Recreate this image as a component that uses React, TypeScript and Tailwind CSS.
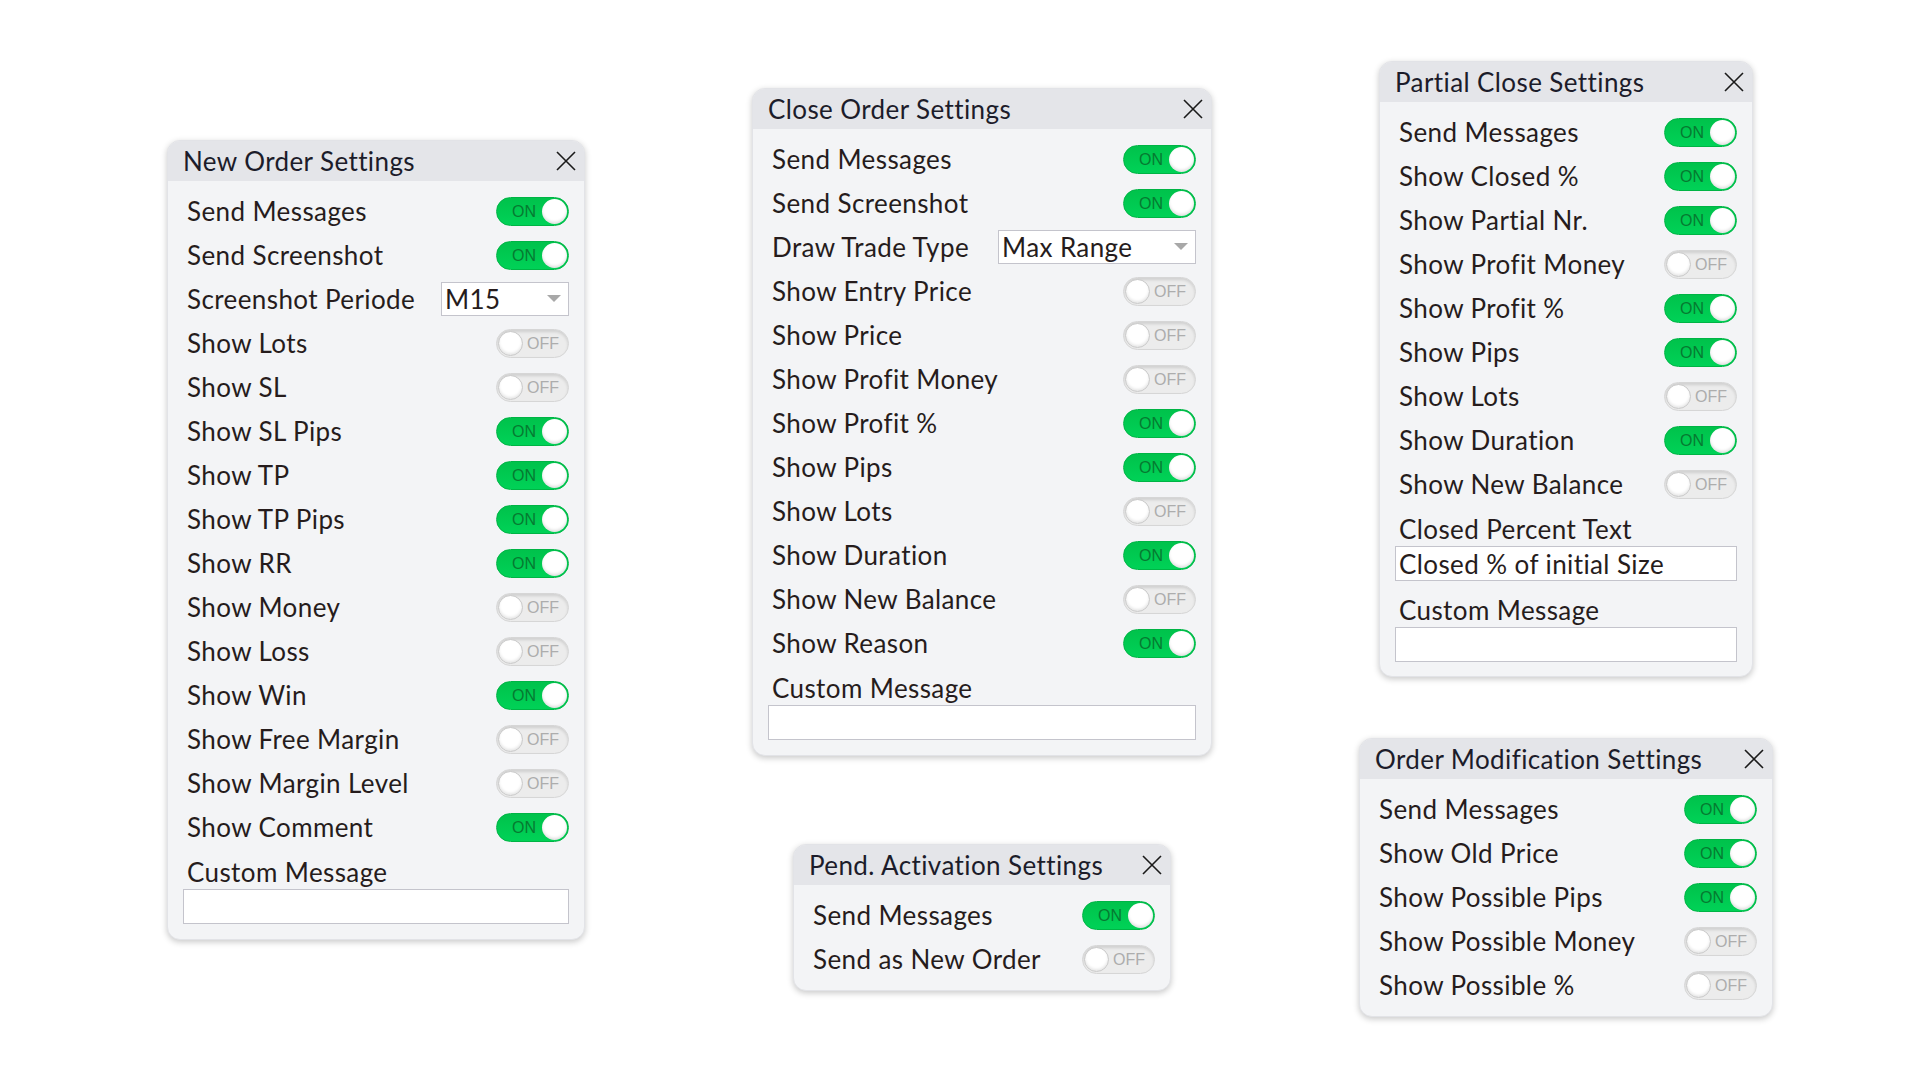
import type { ReactNode } from "react"

type Row =
  | { kind: "toggle"; label: string; on: boolean }
  | { kind: "select"; label: string; value: string; width: string }
  | { kind: "text"; label: string; value?: string; gap?: boolean }

const newOrderRows: Row[] = [
  { kind: "toggle", label: "Send Messages", on: true },
  { kind: "toggle", label: "Send Screenshot", on: true },
  { kind: "select", label: "Screenshot Periode", value: "M15", width: "w-[128px]" },
  { kind: "toggle", label: "Show Lots", on: false },
  { kind: "toggle", label: "Show SL", on: false },
  { kind: "toggle", label: "Show SL Pips", on: true },
  { kind: "toggle", label: "Show TP", on: true },
  { kind: "toggle", label: "Show TP Pips", on: true },
  { kind: "toggle", label: "Show RR", on: true },
  { kind: "toggle", label: "Show Money", on: false },
  { kind: "toggle", label: "Show Loss", on: false },
  { kind: "toggle", label: "Show Win", on: true },
  { kind: "toggle", label: "Show Free Margin", on: false },
  { kind: "toggle", label: "Show Margin Level", on: false },
  { kind: "toggle", label: "Show Comment", on: true },
  { kind: "text", label: "Custom Message" },
]

const closeOrderRows: Row[] = [
  { kind: "toggle", label: "Send Messages", on: true },
  { kind: "toggle", label: "Send Screenshot", on: true },
  { kind: "select", label: "Draw Trade Type", value: "Max Range", width: "w-[198px]" },
  { kind: "toggle", label: "Show Entry Price", on: false },
  { kind: "toggle", label: "Show Price", on: false },
  { kind: "toggle", label: "Show Profit Money", on: false },
  { kind: "toggle", label: "Show Profit %", on: true },
  { kind: "toggle", label: "Show Pips", on: true },
  { kind: "toggle", label: "Show Lots", on: false },
  { kind: "toggle", label: "Show Duration", on: true },
  { kind: "toggle", label: "Show New Balance", on: false },
  { kind: "toggle", label: "Show Reason", on: true },
  { kind: "text", label: "Custom Message" },
]

const partialRows: Row[] = [
  { kind: "toggle", label: "Send Messages", on: true },
  { kind: "toggle", label: "Show Closed %", on: true },
  { kind: "toggle", label: "Show Partial Nr.", on: true },
  { kind: "toggle", label: "Show Profit Money", on: false },
  { kind: "toggle", label: "Show Profit %", on: true },
  { kind: "toggle", label: "Show Pips", on: true },
  { kind: "toggle", label: "Show Lots", on: false },
  { kind: "toggle", label: "Show Duration", on: true },
  { kind: "toggle", label: "Show New Balance", on: false },
  { kind: "text", label: "Closed Percent Text", value: "Closed % of initial Size" },
  { kind: "text", label: "Custom Message", gap: true },
]

const modificationRows: Row[] = [
  { kind: "toggle", label: "Send Messages", on: true },
  { kind: "toggle", label: "Show Old Price", on: true },
  { kind: "toggle", label: "Show Possible Pips", on: true },
  { kind: "toggle", label: "Show Possible Money", on: false },
  { kind: "toggle", label: "Show Possible %", on: false },
]

const pendingRows: Row[] = [
  { kind: "toggle", label: "Send Messages", on: true },
  { kind: "toggle", label: "Send as New Order", on: false },
]

function CloseIcon() {
  return (
    <svg width="20" height="20" viewBox="0 0 20 20" className="shrink-0">
      <path d="M1 1L19 19M19 1L1 19" stroke="#1a1a1a" strokeWidth="1.6" fill="none" />
    </svg>
  )
}

// iOS-style switch, ON = green with knob right, OFF = grey with knob left
function Toggle({ on }: { on: boolean }) {
  if (on) {
    return (
      <div className="flex h-[29px] w-[73px] shrink-0 items-center justify-between rounded-full border border-[#00b445] bg-gradient-to-b from-[#00c24b] to-[#00d257] pl-[15px] pr-[1px]">
        <span className="font-['Liberation_Sans',sans-serif] text-[16px] leading-[19px] tracking-normal text-[#067a31]">
          ON
        </span>
        <span className="h-[25px] w-[25px] rounded-full bg-white shadow-[inset_0_-2px_3px_rgba(0,0,0,0.12)]" />
      </div>
    )
  }
  return (
    <div className="flex h-[29px] w-[73px] shrink-0 items-center gap-[4px] rounded-full border border-[#d6d6d6] bg-[#ececec] pl-[1px] shadow-[inset_0_2px_3px_rgba(0,0,0,0.12)]">
      <span className="h-[25px] w-[25px] rounded-full border border-[#c8c8c8] bg-white shadow-[inset_0_-2px_3px_rgba(0,0,0,0.1)]" />
      <span className="font-['Liberation_Sans',sans-serif] text-[16px] leading-[19px] tracking-normal text-[#adadad]">
        OFF
      </span>
    </div>
  )
}

function Select({ value, width }: { value: string; width: string }) {
  return (
    <div
      className={`flex h-[34px] ${width} items-center justify-between border border-[#c4c4cc] bg-white pl-[3px] pr-[7px]`}
    >
      <span className="leading-none">{value}</span>
      <svg width="14" height="8" viewBox="0 0 14 8">
        <path d="M0 0H14L7 7Z" fill="#a8a8a8" />
      </svg>
    </div>
  )
}

function RowView({ row }: { row: Row }) {
  if (row.kind === "toggle") {
    return (
      <div className="flex h-[44px] items-center justify-between">
        <span className="pl-[4px]">{row.label}</span>
        <Toggle on={row.on} />
      </div>
    )
  }
  if (row.kind === "select") {
    return (
      <div className="flex h-[44px] items-center justify-between">
        <span className="pl-[4px]">{row.label}</span>
        <Select value={row.value} width={row.width} />
      </div>
    )
  }
  return (
    <div className={row.gap ? "mt-[6px]" : ""}>
      <div className="flex h-[40px] items-center pl-[4px] pt-[6px]">{row.label}</div>
      <div className="flex h-[35px] items-center border border-[#c4c4cc] bg-white pl-[3px]">
        {row.value}
      </div>
    </div>
  )
}

function Panel({
  title,
  className,
  bottom,
  children,
}: {
  title: string
  className: string
  bottom: string
  children: ReactNode
}) {
  return (
    <div
      className={`absolute overflow-hidden rounded-[13px] border border-[#e2e3e7] bg-[#f3f4f6] shadow-[0_2px_6px_rgba(0,0,0,0.22)] ${className}`}
    >
      <div className="flex h-[40px] items-center justify-between bg-[#e4e5e9] pl-[15px] pr-[8px] text-[#1c1c2a]">
        <span>{title}</span>
        <CloseIcon />
      </div>
      <div className={`px-[15px] pt-[8px] ${bottom}`}>{children}</div>
    </div>
  )
}

function rows(list: Row[]) {
  return list.map((r) => <RowView key={r.label} row={r} />)
}

export default function App() {
  return (
    <div className="relative h-[1080px] w-[1920px] overflow-hidden bg-white font-['Lato',sans-serif] text-[26px] leading-none tracking-[0.4px] text-[#261c1c]">
      <Panel title="New Order Settings" className="left-[167px] top-[140px] w-[418px]" bottom="pb-[15px]">
        {rows(newOrderRows)}
      </Panel>
      <Panel title="Close Order Settings" className="left-[752px] top-[88px] w-[460px]" bottom="pb-[15px]">
        {rows(closeOrderRows)}
      </Panel>
      <Panel title="Partial Close Settings" className="left-[1379px] top-[61px] w-[374px]" bottom="pb-[14px]">
        {rows(partialRows)}
      </Panel>
      <Panel title="Order Modification Settings" className="left-[1359px] top-[738px] w-[414px]" bottom="pb-[9px]">
        {rows(modificationRows)}
      </Panel>
      <Panel title="Pend. Activation Settings" className="left-[793px] top-[844px] w-[378px]" bottom="pb-[9px]">
        {rows(pendingRows)}
      </Panel>
    </div>
  )
}
